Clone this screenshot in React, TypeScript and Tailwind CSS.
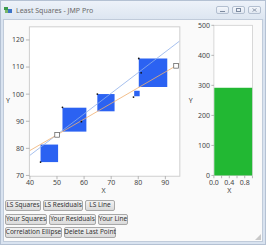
import React from 'react';

const font = { fontFamily: '"Noto Sans", "Open Sans", sans-serif' };

// main plot scale: x 40..95, y 70..125
const px = (v: number) => 30 + (v - 40) * 2.72;
const py = (v: number) => 175.7 - (v - 70) * 2.72;

const squares = [
  { x: 40.7, y: 144.7, s: 17.6 },
  { x: 62.7, y: 107.7, s: 24 },
  { x: 97.7, y: 94, s: 17.3 },
  { x: 134.7, y: 90.7, s: 5.5 },
  { x: 139.3, y: 58.3, s: 28.6 },
];

const points = [
  [40.7, 162.3],
  [62.7, 107.3],
  [81.7, 121.7],
  [97.7, 94],
  [134, 97],
  [139.3, 58.3],
  [141.7, 72.7],
];

const buttonRows = [
  [
    { label: 'LS Squares', w: 'w-[36px]' },
    { label: 'LS Residuals', w: 'w-[40px]' },
    { label: 'LS Line', w: 'w-[30px]' },
  ],
  [
    { label: 'Your Squares', w: 'w-[42px]' },
    { label: 'Your Residuals', w: 'w-[47px]' },
    { label: 'Your Line', w: 'w-[30px]' },
  ],
  [
    { label: 'Correlation Ellipse', w: 'w-[57px]' },
    { label: 'Delete Last Point', w: 'w-[52px]' },
  ],
];

const MainChart = () => (
  <svg width={183} height={179} viewBox="3 19 183 179" style={font}>
    <rect x={29.5} y={26.5} width={151} height={150} fill="#fff" stroke="#cfcfcf" />
    {[70, 80, 90, 100, 110, 120].map((v) => (
      <g key={v}>
        <line x1={26} x2={29.5} y1={py(v)} y2={py(v)} stroke="#888" strokeWidth={0.6} />
        <text x={24} y={py(v) + 2.4} fontSize={7} textAnchor="end" fill="#444">
          {v}
        </text>
      </g>
    ))}
    {[40, 50, 60, 70, 80, 90].map((v) => (
      <g key={v}>
        <line x1={px(v)} x2={px(v)} y1={176.5} y2={179.5} stroke="#888" strokeWidth={0.6} />
        <text x={px(v)} y={185.5} fontSize={7} textAnchor="middle" fill="#444">
          {v}
        </text>
      </g>
    ))}
    <text x={8} y={103} fontSize={7} textAnchor="middle" fill="#444">Y</text>
    <text x={104} y={193.5} fontSize={7} textAnchor="middle" fill="#444">X</text>

    {squares.map((q, i) => (
      <rect key={i} x={q.x} y={q.y} width={q.s} height={q.s} fill="#2b62f2" />
    ))}

    <line x1={30} y1={155.5} x2={180} y2={41} stroke="#8fb0ea" strokeWidth={0.8} />
    <line x1={30} y1={150.7} x2={180} y2={63.7} stroke="#f0b070" strokeWidth={0.8} />

    {points.map(([x, y], i) => (
      <circle key={i} cx={x} cy={y} r={0.9} fill="#111" />
    ))}

    <rect x={55} y={132.7} width={4.6} height={4.6} fill="#fff" stroke="#555" strokeWidth={0.7} />
    <rect x={174.4} y={63.4} width={4.6} height={4.6} fill="#fff" stroke="#555" strokeWidth={0.7} />
  </svg>
);

const ry = (v: number) => 175.7 - v * 0.3014;
const rx = (v: number) => 215 + v * 38.7;

const SideChart = () => (
  <svg width={77} height={179} viewBox="186 19 77 179" style={font}>
    <rect x={215} y={25} width={38.7} height={150.7} fill="#fff" stroke="#cfcfcf" strokeWidth={0.8} />
    <rect x={215.4} y={ry(292)} width={38} height={175.7 - ry(292)} fill="#22b833" />
    {[0, 100, 200, 300, 400, 500].map((v) => (
      <g key={v}>
        <line x1={212.5} x2={215} y1={ry(v)} y2={ry(v)} stroke="#888" strokeWidth={0.6} />
        <text x={211} y={ry(v) + 2.4} fontSize={7} textAnchor="end" fill="#444">
          {v}
        </text>
      </g>
    ))}
    {[0, 0.2, 0.4, 0.6, 0.8, 1].map((v) => (
      <line key={v} x1={rx(v)} x2={rx(v)} y1={176} y2={178.5} stroke="#888" strokeWidth={0.6} />
    ))}
    {[
      ['0.0', 0],
      ['0.4', 0.4],
      ['0.8', 0.8],
    ].map(([t, v]) => (
      <text key={t as string} x={rx(v as number)} y={185.5} fontSize={7} textAnchor="middle" fill="#444">
        {t}
      </text>
    ))}
    <text x={191.7} y={103} fontSize={7} textAnchor="middle" fill="#444">Y</text>
    <text x={230.5} y={193.5} fontSize={7} textAnchor="middle" fill="#444">X</text>
  </svg>
);

const WinButton = ({ children }: { children: React.ReactNode }) => (
  <div className="w-[13px] h-[8px] rounded-[2px] border border-[#b3bfd0] bg-gradient-to-b from-[#f3f6fb] to-[#e1e8f2] flex items-center justify-center">
    {children}
  </div>
);

export default function App() {
  return (
    <div className="w-[266px] h-[245px] flex flex-col bg-[#d9e3f0] border border-[#b4c1d3]" style={font}>
      {/* Title bar */}
      <div className="h-[18px] flex items-center pl-[3px] pr-[4px] bg-gradient-to-b from-[#edf2f9] to-[#dde6f1]">
        <svg width={9} height={8} viewBox="0 0 9 8" className="mr-[3px]">
          <rect x={0} y={1} width={4} height={3} fill="#3a9a4a" />
          <rect x={4} y={3} width={4} height={4} fill="#3b73c8" />
          <rect x={1} y={4} width={3} height={3} fill="#7ab86a" />
        </svg>
        <span className="text-[7px] text-[#6a6a6a] leading-none">Least Squares - JMP Pro</span>
        <div className="ml-auto flex gap-[3px]">
          <WinButton>
            <div className="w-[5px] h-[1px] bg-[#7d8ba0] mt-[2px]" />
          </WinButton>
          <WinButton>
            <div className="w-[5px] h-[4px] border border-[#7d8ba0]" />
          </WinButton>
          <WinButton>
            <svg width={5} height={4} viewBox="0 0 5 4">
              <path d="M0.5 0.5 L4.5 3.5 M4.5 0.5 L0.5 3.5" stroke="#7d8ba0" strokeWidth={0.8} />
            </svg>
          </WinButton>
        </div>
      </div>

      {/* Content */}
      <div className="flex-1 mx-[2px] mb-[2px] bg-[#fafafa] border border-[#c0cbda] flex flex-col relative">
        <div className="flex -mt-[1px] -ml-[1px]">
          <MainChart />
          <SideChart />
        </div>

        <div className="flex flex-col gap-[2.5px] pl-[1px] mt-[2px]">
          {buttonRows.map((row, i) => (
            <div key={i} className="flex gap-[2px]">
              {row.map((b) => (
                <div
                  key={b.label}
                  className={`${b.w} h-[11px] flex items-center justify-center rounded-[2px] border border-[#a8a8a8] bg-gradient-to-b from-[#f2f2f2] to-[#dadada] text-[6.5px] text-[#333] leading-none whitespace-nowrap`}
                >
                  {b.label}
                </div>
              ))}
            </div>
          ))}
        </div>

        {/* resize grip */}
        <svg width={6} height={6} viewBox="0 0 6 6" className="absolute right-[1px] bottom-[1px]">
          <path d="M6 0 L6 6 L0 6 Z" fill="#c8c8c8" />
        </svg>
      </div>
    </div>
  );
}
